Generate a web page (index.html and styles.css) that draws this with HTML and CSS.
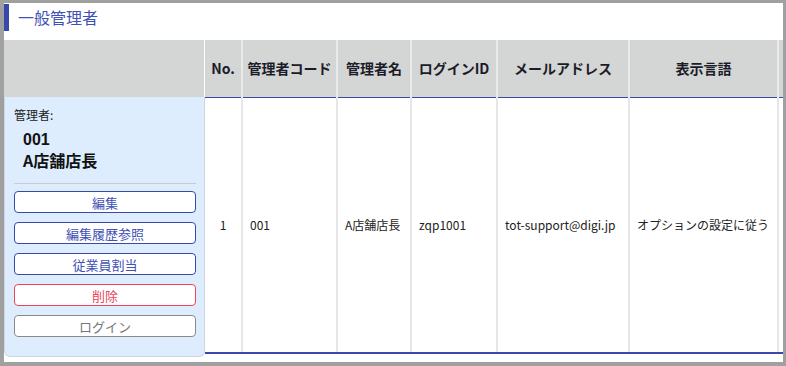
FILE: index.html
```html
<!DOCTYPE html>
<html lang="ja">
<head>
    <meta charset="UTF-8">
    <title>一般管理者</title>
    <link rel="stylesheet" href="styles.css">
</head>
<body>
    <div class="frame">
        <h1 class="page-title">一般管理者</h1>

        <div class="content">
            <div class="side">
                <div class="side-head"></div>
                <div class="panel">
                    <div class="panel-label">管理者:</div>
                    <div class="panel-name">
                        <div class="panel-code">001</div>
                        <div>A店舗店長</div>
                    </div>
                    <hr class="panel-divider">
                    <div class="actions">
                        <button class="btn">編集</button>
                        <button class="btn">編集履歴参照</button>
                        <button class="btn">従業員割当</button>
                        <button class="btn btn-danger">削除</button>
                        <button class="btn btn-muted">ログイン</button>
                    </div>
                </div>
            </div>

            <div class="table-wrap">
                <table class="admin-table">
                    <colgroup>
                        <col class="col-no">
                        <col class="col-code">
                        <col class="col-name">
                        <col class="col-login">
                        <col class="col-mail">
                        <col class="col-lang">
                        <col class="col-extra">
                    </colgroup>
                    <thead>
                        <tr>
                            <th>No.</th>
                            <th>管理者コード</th>
                            <th>管理者名</th>
                            <th>ログインID</th>
                            <th>メールアドレス</th>
                            <th>表示言語</th>
                            <th></th>
                        </tr>
                    </thead>
                    <tbody>
                        <tr>
                            <td class="center">1</td>
                            <td>001</td>
                            <td>A店舗店長</td>
                            <td>zqp1001</td>
                            <td>tot-support@digi.jp</td>
                            <td>オプションの設定に従う</td>
                            <td></td>
                        </tr>
                    </tbody>
                </table>
            </div>
        </div>
    </div>
</body>
</html>
```

FILE: styles.css
```css
body {
    margin: 0;
    background-color: #a0a0a0;
    font-family: "Noto Sans CJK JP", "Noto Sans", sans-serif;
    color: #222;
}
.frame {
    margin: 3px 3px 0 4px;
    height: 359px;
    background-color: #fff;
    overflow: hidden;
}
.page-title {
    margin: 1px 0 0 0;
    height: 27px;
    line-height: 26px;
    padding-left: 9px;
    border-left: 5px solid #3949ab;
    font-size: 16px;
    font-weight: normal;
    color: #3f51b5;
}
.content {
    display: flex;
    margin-top: 9px;
}
.side {
    width: 201px;
    flex-shrink: 0;
}
.side-head {
    height: 57px;
    background-color: #d4d5d5;
    border-right: 1px solid #fff;
}
.panel {
    height: 260px;
    box-sizing: border-box;
    padding: 10px 8px 0 9px;
    background-color: #ddedfd;
    border: 1px solid #cfd6df;
    border-top: none;
    border-radius: 0 0 6px 6px;
}
.panel-label {
    font-size: 12px;
    line-height: 16px;
}
.panel-name {
    margin: 7px 0 0 9px;
    font-size: 16px;
    font-weight: bold;
    line-height: 20px;
    color: #111;
}
.panel-code {
    font-family: "Liberation Sans", sans-serif;
}
.panel-divider {
    margin: 13px 0 0 0;
    border: none;
    border-top: 1px solid #c6ccd3;
}
.actions {
    display: flex;
    flex-direction: column;
    gap: 9px;
    margin-top: 7px;
}
.btn {
    height: 22px;
    padding: 0;
    font-family: inherit;
    font-size: 13px;
    color: #3f51b5;
    background-color: #fff;
    border: 1px solid #3949ab;
    border-radius: 4px;
}
.btn-danger {
    color: #ee4459;
    border-color: #ee4459;
}
.btn-muted {
    color: #777;
    border-color: #8a8a8a;
}
.table-wrap {
    flex: 1;
    overflow: hidden;
}
.admin-table {
    border-collapse: collapse;
    table-layout: fixed;
    width: 673px;
}
.admin-table th,
.admin-table td {
    box-sizing: border-box;
    white-space: nowrap;
    overflow: hidden;
}
.admin-table th {
    height: 57px;
    padding: 0 2px;
    background-color: #d4d5d5;
    border-left: 2px solid #e9eaea;
    border-bottom: 1px solid #3949ab;
    font-size: 14px;
    font-weight: bold;
    color: #1c1c28;
    text-align: center;
}
.admin-table th:first-child,
.admin-table td:first-child {
    border-left: none;
}
.admin-table td {
    height: 256px;
    padding: 0 7px;
    border-left: 2px solid #e6e6e6;
    border-bottom: 2px solid #3949ab;
    font-size: 12px;
}
.admin-table td.center {
    text-align: center;
}
.col-no { width: 37px; }
.col-code { width: 95px; }
.col-name { width: 74px; }
.col-login { width: 86px; }
.col-mail { width: 132px; }
.col-lang { width: 149px; }
.col-extra { width: 100px; }
```
